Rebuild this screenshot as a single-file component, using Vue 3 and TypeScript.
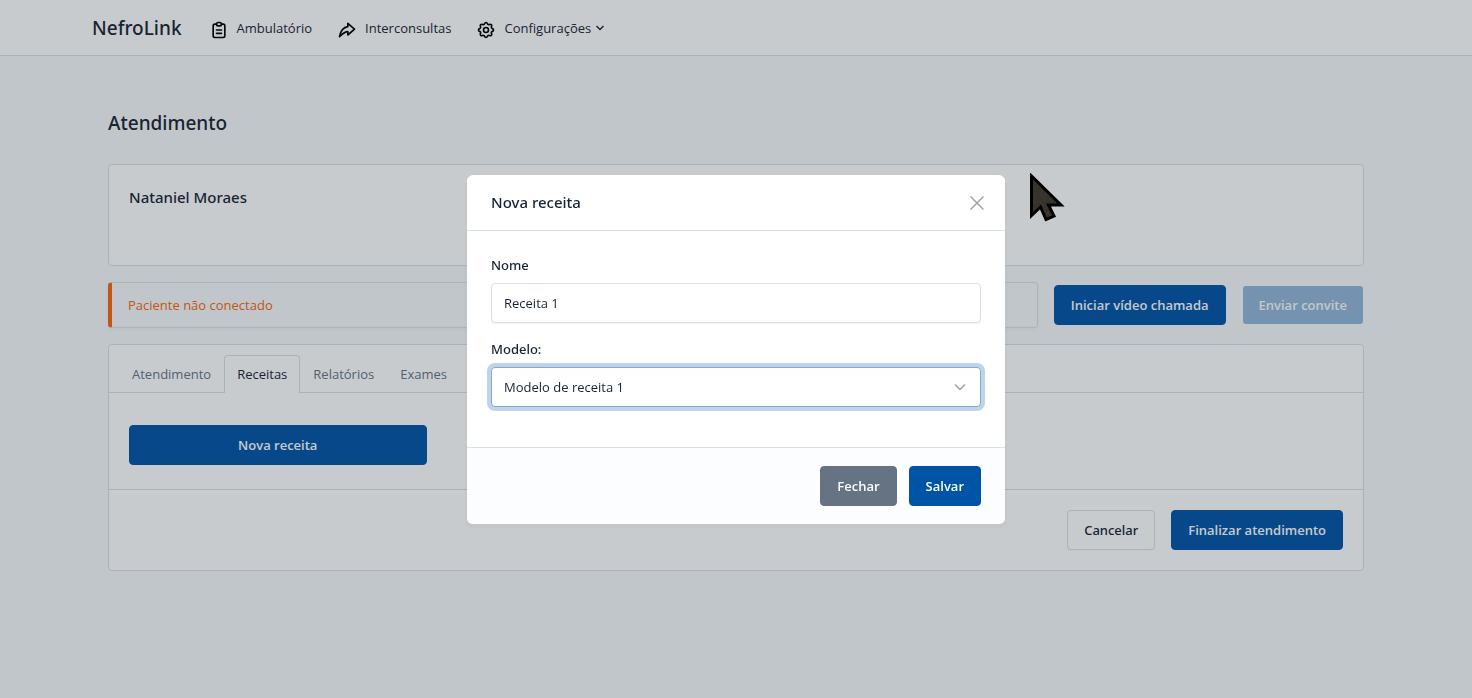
<script setup lang="ts">
import { ref } from 'vue'

const tabs = ['Atendimento', 'Receitas', 'Relatórios', 'Exames']
const activeTab = ref('Receitas')
const recipeName = ref('Receita 1')
const template = ref('Modelo de receita 1')
const modalOpen = ref(true)
</script>

<template>
  <div class="page">
    <header class="navbar">
      <div class="navbar-inner">
        <a href="#" class="brand">NefroLink</a>
        <nav class="nav">
          <a href="#" class="nav-link">
            <svg class="icon" viewBox="0 0 24 24" aria-hidden="true">
              <path d="M9 5h-2a2 2 0 0 0 -2 2v12a2 2 0 0 0 2 2h10a2 2 0 0 0 2 -2v-12a2 2 0 0 0 -2 -2h-2" />
              <rect x="9" y="3" width="6" height="4" rx="2" />
              <path d="M9 12h6M9 16h6" />
            </svg>
            <span>Ambulatório</span>
          </a>
          <a href="#" class="nav-link">
            <svg class="icon" viewBox="0 0 24 24" aria-hidden="true">
              <path d="M13 4v4c-6.575 1.028 -9.02 6.788 -10 12c-.037 .206 5.384 -5.962 10 -6v4l8 -7l-8 -7z" />
            </svg>
            <span>Interconsultas</span>
          </a>
          <a href="#" class="nav-link">
            <svg class="icon" viewBox="0 0 24 24" aria-hidden="true">
              <path d="M10.325 4.317c.426 -1.756 2.924 -1.756 3.35 0a1.724 1.724 0 0 0 2.573 1.066c1.543 -.94 3.31 .826 2.37 2.37a1.724 1.724 0 0 0 1.065 2.572c1.756 .426 1.756 2.924 0 3.35a1.724 1.724 0 0 0 -1.066 2.573c.94 1.543 -.826 3.31 -2.37 2.37a1.724 1.724 0 0 0 -2.572 1.065c-.426 1.756 -2.924 1.756 -3.35 0a1.724 1.724 0 0 0 -2.573 -1.066c-1.543 .94 -3.31 -.826 -2.37 -2.37a1.724 1.724 0 0 0 -1.065 -2.572c-1.756 -.426 -1.756 -2.924 0 -3.35a1.724 1.724 0 0 0 1.066 -2.573c-.94 -1.543 .826 -3.31 2.37 -2.37c1 .608 2.296 .07 2.572 -1.065z" />
              <circle cx="12" cy="12" r="3" />
            </svg>
            <span>Configurações</span>
            <svg class="caret" viewBox="0 0 10 6" aria-hidden="true"><path d="M1.5 1l3.5 3.5l3.5 -3.5" /></svg>
          </a>
        </nav>
      </div>
    </header>

    <main class="content">
      <h1 class="page-title">Atendimento</h1>

      <section class="card patient">
        <h2 class="patient-name">Nataniel Moraes</h2>
      </section>

      <div class="status-row">
        <div class="alert" role="status">Paciente não conectado</div>
        <button type="button" class="btn primary">Iniciar vídeo chamada</button>
        <button type="button" class="btn primary" disabled>Enviar convite</button>
      </div>

      <section class="card">
        <div class="tabs" role="tablist">
          <button
            v-for="tab in tabs"
            :key="tab"
            type="button"
            role="tab"
            class="tab"
            :class="{ active: tab === activeTab }"
            :aria-selected="tab === activeTab"
            @click="activeTab = tab"
          >{{ tab }}</button>
        </div>
        <div class="tab-body">
          <button type="button" class="btn primary" @click="modalOpen = true">Nova receita</button>
        </div>
        <div class="card-footer">
          <button type="button" class="btn outline">Cancelar</button>
          <button type="button" class="btn primary">Finalizar atendimento</button>
        </div>
      </section>
    </main>

    <div v-if="modalOpen" class="backdrop">
      <form class="modal" role="dialog" aria-labelledby="modal-title" @submit.prevent>
        <div class="modal-header">
          <h2 id="modal-title" class="modal-title">Nova receita</h2>
          <button type="button" class="close" aria-label="Fechar janela" @click="modalOpen = false">
            <svg viewBox="0 0 16 16" aria-hidden="true"><path d="M1.5 1.5l13 13M14.5 1.5l-13 13" /></svg>
          </button>
        </div>
        <div class="modal-body">
          <div class="field">
            <label for="recipe-name">Nome</label>
            <input id="recipe-name" v-model="recipeName" type="text" class="control" />
          </div>
          <div class="field">
            <label for="recipe-template">Modelo:</label>
            <div class="select-wrap">
              <select id="recipe-template" v-model="template" class="control focused">
                <option>Modelo de receita 1</option>
              </select>
              <svg class="select-caret" viewBox="0 0 12 8" aria-hidden="true"><path d="M1 1.5l5 5l5 -5" /></svg>
            </div>
          </div>
        </div>
        <div class="modal-footer">
          <button type="button" class="btn secondary" @click="modalOpen = false">Fechar</button>
          <button type="submit" class="btn primary">Salvar</button>
        </div>
      </form>
    </div>

    <svg class="pointer" viewBox="0 0 35 49" aria-hidden="true">
      <path d="M1.5 3V42.5L10.5 34L16 46.5L24 43L18.5 32H31Z" />
    </svg>
  </div>
</template>

<style>
body {
  margin: 0;
  background: #f6f9fa;
}
</style>

<style scoped>
.page {
  min-height: 100vh;
  background: #f6f9fa;
  color: #182433;
  font-family: "Open Sans", "Noto Sans", sans-serif;
  font-size: 13px;
  line-height: 20px;
}
.page *,
.page {
  box-sizing: border-box;
}
h1,
h2 {
  margin: 0;
}
button,
input,
select {
  font: inherit;
  color: inherit;
}
.navbar {
  background: #fff;
  border-bottom: 1px solid #dadfe5;
}
.navbar-inner {
  display: flex;
  align-items: center;
  gap: 27px;
  max-width: 1320px;
  height: 55px;
  margin: 0 auto;
  padding: 0 16px;
}
.brand {
  color: inherit;
  font-size: 19px;
  line-height: 24px;
  text-decoration: none;
}
.nav {
  display: flex;
  gap: 25px;
}
.nav-link {
  display: flex;
  align-items: center;
  gap: 8px;
  color: inherit;
  text-decoration: none;
}
.icon {
  width: 20px;
  height: 20px;
  margin-top: 4px;
  fill: none;
  stroke: #000;
  stroke-width: 2;
  stroke-linecap: round;
  stroke-linejoin: round;
}
.caret {
  width: 10px;
  height: 6px;
  margin-left: -4px;
  fill: none;
  stroke: currentColor;
  stroke-width: 1.4;
}
.content {
  max-width: 1288px;
  margin: 0 auto;
  padding: 52px 16px 0;
}
.page-title {
  margin-bottom: 25px;
  font-size: 19px;
  line-height: 31px;
}
.brand,
.page-title,
.patient-name,
.modal-title,
.field label,
.btn.outline {
  font-family: "Noto Sans", "Open Sans", sans-serif;
  font-weight: 500;
}
.card {
  background: #fff;
  border: 1px solid #dadfe5;
  border-radius: 4px;
}
.patient {
  min-height: 102px;
  padding: 20px;
}
.patient-name {
  font-size: 15px;
  line-height: 24px;
}
.status-row {
  display: flex;
  align-items: center;
  gap: 16px;
  margin: 16px 0;
}
.alert {
  flex: 1;
  padding: 12px 16px;
  border: 1px solid #dadfe5;
  border-left: 4px solid #f76707;
  border-radius: 4px;
  color: #f76707;
  box-shadow: 0 2px 4px rgba(24, 36, 51, 0.04);
}
.btn {
  padding: 9px 16px;
  border: 1px solid transparent;
  border-radius: 4px;
  font-weight: 600;
  white-space: nowrap;
  cursor: pointer;
}
.primary {
  background-color: #0054a6;
  border-color: #0054a6;
  color: #fcfdfe;
}
.primary:disabled {
  border-color: transparent;
  background-clip: padding-box;
  opacity: 0.4;
}
.secondary {
  background: #667382;
  border-color: #667382;
  color: #fcfdfe;
}
.outline {
  background: #fff;
  border-color: #dadfe5;
  box-shadow: 0 1px 0 rgba(24, 36, 51, 0.04);
}
.tabs {
  display: flex;
  padding: 10px 10px 0;
  border-bottom: 1px solid #dadfe5;
}
.tab {
  margin-bottom: -1px;
  padding: 8px 12px 9px;
  border: 1px solid transparent;
  border-bottom: 0;
  border-radius: 4px 4px 0 0;
  background: none;
  color: #667382;
  cursor: pointer;
}
.tab.active {
  border-color: #dadfe5;
  background: #fff;
  color: #182433;
}
.tab-body {
  display: grid;
  grid-template-columns: repeat(4, 1fr);
  gap: 8px;
  padding: 32px 20px 24px;
}
.card-footer {
  display: flex;
  justify-content: flex-end;
  gap: 16px;
  padding: 20px;
  border-top: 1px solid #dadfe5;
}
.backdrop {
  position: fixed;
  inset: 0;
  display: flex;
  align-items: center;
  justify-content: center;
  background: rgba(24, 36, 51, 0.24);
}
.modal {
  width: 100%;
  max-width: 538px;
  border-radius: 6px;
  background: #fff;
  box-shadow: 0 2px 4px rgba(24, 36, 51, 0.04);
}
.modal-header {
  display: flex;
  align-items: center;
  justify-content: space-between;
  padding: 0 20px 0 24px;
  border-bottom: 1px solid #dadfe5;
}
.modal-title {
  font-size: 15px;
  line-height: 55px;
}
.close {
  display: flex;
  padding: 1px 0 0;
  border: 0;
  background: none;
  cursor: pointer;
}
.close svg {
  width: 16px;
  height: 16px;
  fill: none;
  stroke: #a3a7ad;
  stroke-width: 1.6;
}
.modal-body {
  padding: 24px 24px 40px;
  display: grid;
  gap: 16px;
}
.field {
  display: grid;
  gap: 8px;
}
.control {
  display: block;
  width: 100%;
  height: 40px;
  padding: 0 12px;
  border: 1px solid #dadfe5;
  border-radius: 4px;
  background: #fff;
  box-shadow: 0 1px 1px rgba(24, 36, 51, 0.06);
  appearance: none;
  outline: 0;
}
.control.focused {
  border-color: #80aad3;
  box-shadow: 0 0 0 4px rgba(0, 84, 166, 0.25);
}
.select-wrap {
  position: relative;
}
.select-caret {
  position: absolute;
  top: 16px;
  right: 15px;
  width: 12px;
  height: 8px;
  fill: none;
  stroke: #98a1ad;
  stroke-width: 1.5;
  pointer-events: none;
}
.modal-footer {
  display: flex;
  justify-content: flex-end;
  gap: 12px;
  padding: 18px 24px;
  border-top: 1px solid #dadfe5;
  border-radius: 0 0 6px 6px;
  background: #fcfdfe;
}
.pointer {
  position: fixed;
  top: 173px;
  left: 1030px;
  width: 35px;
  height: 49px;
  fill: #37332f;
  stroke: #000;
  stroke-width: 3;
  pointer-events: none;
}
</style>
